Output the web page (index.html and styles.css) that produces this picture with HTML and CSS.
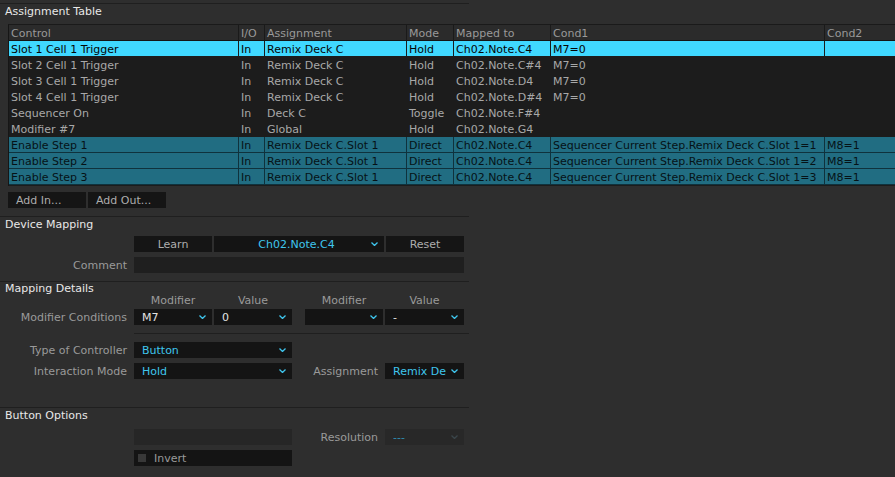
FILE: index.html
```html
<!DOCTYPE html>
<html>
<head>
<meta charset="utf-8">
<link rel="stylesheet" href="styles.css">
</head>
<body>
<div class="rule top"></div>
<div class="sec-title t-assign">Assignment Table</div>
<div class="table">
  <div class="row head"><div class="c">Control</div><div class="c">I/O</div><div class="c">Assignment</div><div class="c">Mode</div><div class="c">Mapped to</div><div class="c">Cond1</div><div class="c">Cond2</div></div>
  <div class="row sel"><div class="c">Slot 1 Cell 1 Trigger</div><div class="c">In</div><div class="c">Remix Deck C</div><div class="c">Hold</div><div class="c">Ch02.Note.C4</div><div class="c">M7=0</div><div class="c"></div></div>
  <div class="row"><div class="c">Slot 2 Cell 1 Trigger</div><div class="c">In</div><div class="c">Remix Deck C</div><div class="c">Hold</div><div class="c">Ch02.Note.C#4</div><div class="c">M7=0</div><div class="c"></div></div>
  <div class="row"><div class="c">Slot 3 Cell 1 Trigger</div><div class="c">In</div><div class="c">Remix Deck C</div><div class="c">Hold</div><div class="c">Ch02.Note.D4</div><div class="c">M7=0</div><div class="c"></div></div>
  <div class="row"><div class="c">Slot 4 Cell 1 Trigger</div><div class="c">In</div><div class="c">Remix Deck C</div><div class="c">Hold</div><div class="c">Ch02.Note.D#4</div><div class="c">M7=0</div><div class="c"></div></div>
  <div class="row"><div class="c">Sequencer On</div><div class="c">In</div><div class="c">Deck C</div><div class="c">Toggle</div><div class="c">Ch02.Note.F#4</div><div class="c"></div><div class="c"></div></div>
  <div class="row"><div class="c">Modifier #7</div><div class="c">In</div><div class="c">Global</div><div class="c">Hold</div><div class="c">Ch02.Note.G4</div><div class="c"></div><div class="c"></div></div>
  <div class="row teal"><div class="c">Enable Step 1</div><div class="c">In</div><div class="c">Remix Deck C.Slot 1</div><div class="c">Direct</div><div class="c">Ch02.Note.C4</div><div class="c">Sequencer Current Step.Remix Deck C.Slot 1=1</div><div class="c">M8=1</div></div>
  <div class="row teal"><div class="c">Enable Step 2</div><div class="c">In</div><div class="c">Remix Deck C.Slot 1</div><div class="c">Direct</div><div class="c">Ch02.Note.C4</div><div class="c">Sequencer Current Step.Remix Deck C.Slot 1=2</div><div class="c">M8=1</div></div>
  <div class="row teal"><div class="c">Enable Step 3</div><div class="c">In</div><div class="c">Remix Deck C.Slot 1</div><div class="c">Direct</div><div class="c">Ch02.Note.C4</div><div class="c">Sequencer Current Step.Remix Deck C.Slot 1=3</div><div class="c">M8=1</div></div>
</div>
<div class="add-row">
  <div class="btn add">Add In...</div>
  <div class="btn add">Add Out...</div>
</div>

<div class="rule"></div>
<div class="sec-title t-dev">Device Mapping</div>
<div class="frow">
  <span class="lbl"></span>
  <div class="btn w78">Learn</div>
  <div class="dd w170 centered"><span class="dd-t cyan">Ch02.Note.C4</span><svg class="chev" viewBox="0 0 7 4"><polyline points="0.5,0.5 3.5,3.5 6.5,0.5"/></svg></div>
  <div class="btn w78">Reset</div>
</div>
<div class="frow gap5 mb8">
  <span class="lbl">Comment</span>
  <div class="field w330"></div>
</div>

<div class="rule"></div>
<div class="sec-title t-map">Mapping Details</div>
<div class="frow hdr">
  <span class="lbl"></span>
  <span class="hl w78">Modifier</span>
  <span class="hl w78">Value</span>
  <span class="spacer"></span>
  <span class="hl w78">Modifier</span>
  <span class="hl w79">Value</span>
</div>
<div class="frow">
  <span class="lbl">Modifier Conditions</span>
  <div class="dd w78"><span class="dd-t white">M7</span><svg class="chev" viewBox="0 0 7 4"><polyline points="0.5,0.5 3.5,3.5 6.5,0.5"/></svg></div>
  <div class="dd w78"><span class="dd-t white">0</span><svg class="chev" viewBox="0 0 7 4"><polyline points="0.5,0.5 3.5,3.5 6.5,0.5"/></svg></div>
  <span class="spacer"></span>
  <div class="dd w78"><span class="dd-t white"></span><svg class="chev" viewBox="0 0 7 4"><polyline points="0.5,0.5 3.5,3.5 6.5,0.5"/></svg></div>
  <div class="dd w79"><span class="dd-t white">-</span><svg class="chev" viewBox="0 0 7 4"><polyline points="0.5,0.5 3.5,3.5 6.5,0.5"/></svg></div>
</div>
<div class="rule part"></div>
<div class="frow">
  <span class="lbl">Type of Controller</span>
  <div class="dd w158"><span class="dd-t cyan">Button</span><svg class="chev" viewBox="0 0 7 4"><polyline points="0.5,0.5 3.5,3.5 6.5,0.5"/></svg></div>
</div>
<div class="frow gap5 mb28">
  <span class="lbl">Interaction Mode</span>
  <div class="dd w158"><span class="dd-t cyan">Hold</span><svg class="chev" viewBox="0 0 7 4"><polyline points="0.5,0.5 3.5,3.5 6.5,0.5"/></svg></div>
  <span class="lbl2">Assignment</span>
  <div class="dd w79"><span class="dd-t cyan">Remix De</span><svg class="chev" viewBox="0 0 7 4"><polyline points="0.5,0.5 3.5,3.5 6.5,0.5"/></svg></div>
</div>

<div class="rule"></div>
<div class="sec-title t-btn">Button Options</div>
<div class="frow">
  <span class="lbl"></span>
  <div class="field disabled w158"></div>
  <span class="lbl2">Resolution</span>
  <div class="dd disabled w79"><span class="dd-t dim">---</span><svg class="chev dimchev" viewBox="0 0 7 4"><polyline points="0.5,0.5 3.5,3.5 6.5,0.5"/></svg></div>
</div>
<div class="frow gap5">
  <span class="lbl"></span>
  <div class="check w158"><span class="box"></span><span class="check-t">Invert</span></div>
</div>
</body>
</html>
```

FILE: styles.css
```css
* { box-sizing: border-box; }
html, body { margin: 0; padding: 0; }
body {
  background: #2e2e2e;
  width: 895px;
  height: 477px;
  overflow: hidden;
  font-family: "DejaVu Sans", "Liberation Sans", sans-serif;
  font-size: 11px;
  color: #a8a8a8;
}

.rule { width: 469px; height: 1px; background: #1f1f1f; }
.rule.top { margin-top: 3px; }
.rule.part { margin-left: 134px; width: 335px; margin-top: 8px; margin-bottom: 8px; }

.sec-title { color: #e8e8e8; padding-left: 5px; line-height: 16px; }
.t-assign { height: 20px; }
.t-dev { height: 19px; }
.t-map { height: 12px; line-height: 14px; }
.t-btn { height: 21px; }

/* Assignment table */
.table {
  margin-left: 8px;
  background: #1c1c1c;
  border-left: 1px solid #161616;
  border-top: 1px solid #1a1a1a;
  padding-bottom: 1px;
}
.row {
  display: grid;
  grid-template-columns: 229px 26px 142px 47px 97px 274px 1fr;
  height: 16px;
  line-height: 17px;
  border-bottom: 1px solid transparent;
}
.c {
  padding-left: 2px;
  border-left: 1px solid transparent;
  white-space: nowrap;
  overflow: hidden;
}
.c:first-child { border-left: 0; }
.head { background: #2b2b2b; color: #999; border-bottom-color: #141414; }
.head .c { border-left-color: #1a1a1a; }
.sel { background: #40d8ff; color: #050505; border-bottom-color: #1c1c1c; }
.sel .c { border-left-color: #1b1b1b; }
.teal { background: #216d82; color: #061216; border-bottom-color: #0f323d; }
.teal .c { border-left-color: #0f323d; }

.add-row { display: flex; gap: 2px; margin: 6px 0 8px 8px; }
.btn {
  height: 16px;
  line-height: 18px;
  background: #151515;
  color: #adadad;
  text-align: center;
  white-space: nowrap;
}
.btn.add { width: 78px; text-align: left; padding-left: 8px; }

/* form rows */
.frow { display: flex; gap: 2px; height: 16px; align-items: stretch; }
.gap5 { margin-top: 5px; }
.mb8 { margin-bottom: 8px; }
.mb28 { margin-bottom: 28px; }
.lbl { width: 127px; margin-right: 5px; text-align: right; line-height: 18px; color: #9a9a9a; white-space: nowrap; }
.lbl2 { width: 84px; margin-right: 5px; text-align: right; line-height: 18px; color: #9a9a9a; white-space: nowrap; }
.spacer { width: 9px; }
.hdr { height: 12px; margin-bottom: 3px; }
.hl { text-align: center; line-height: 14px; color: #9a9a9a; }

.w78 { width: 78px; }
.w79 { width: 79px; }
.w158 { width: 158px; }
.w170 { width: 170px; }
.w330 { width: 330px; }

.dd {
  display: flex;
  align-items: stretch;
  background: #141414;
  padding: 0 6px 0 8px;
}
.dd-t { flex: 1; line-height: 18px; white-space: nowrap; overflow: hidden; }
.dd.centered .dd-t { text-align: center; }
.cyan { color: #3fc6ee; }
.white { color: #e2e2e2; }
.dim { color: #2f8db2; }
.chev { width: 7px; height: 4px; flex: none; align-self: center; }
.chev polyline { fill: none; stroke: #3fc6ee; stroke-width: 1.3; }
.dimchev polyline { stroke: #3a454a; }
.dd.disabled { background: #282828; }

.field { background: #1f1f1f; }
.field.disabled { background: #262626; }

.check { display: flex; align-items: stretch; background: #141414; padding-left: 4px; }
.box { width: 8px; height: 8px; background: #383838; margin-right: 8px; align-self: center; }
.check-t { color: #9a9a9a; line-height: 18px; }
```
